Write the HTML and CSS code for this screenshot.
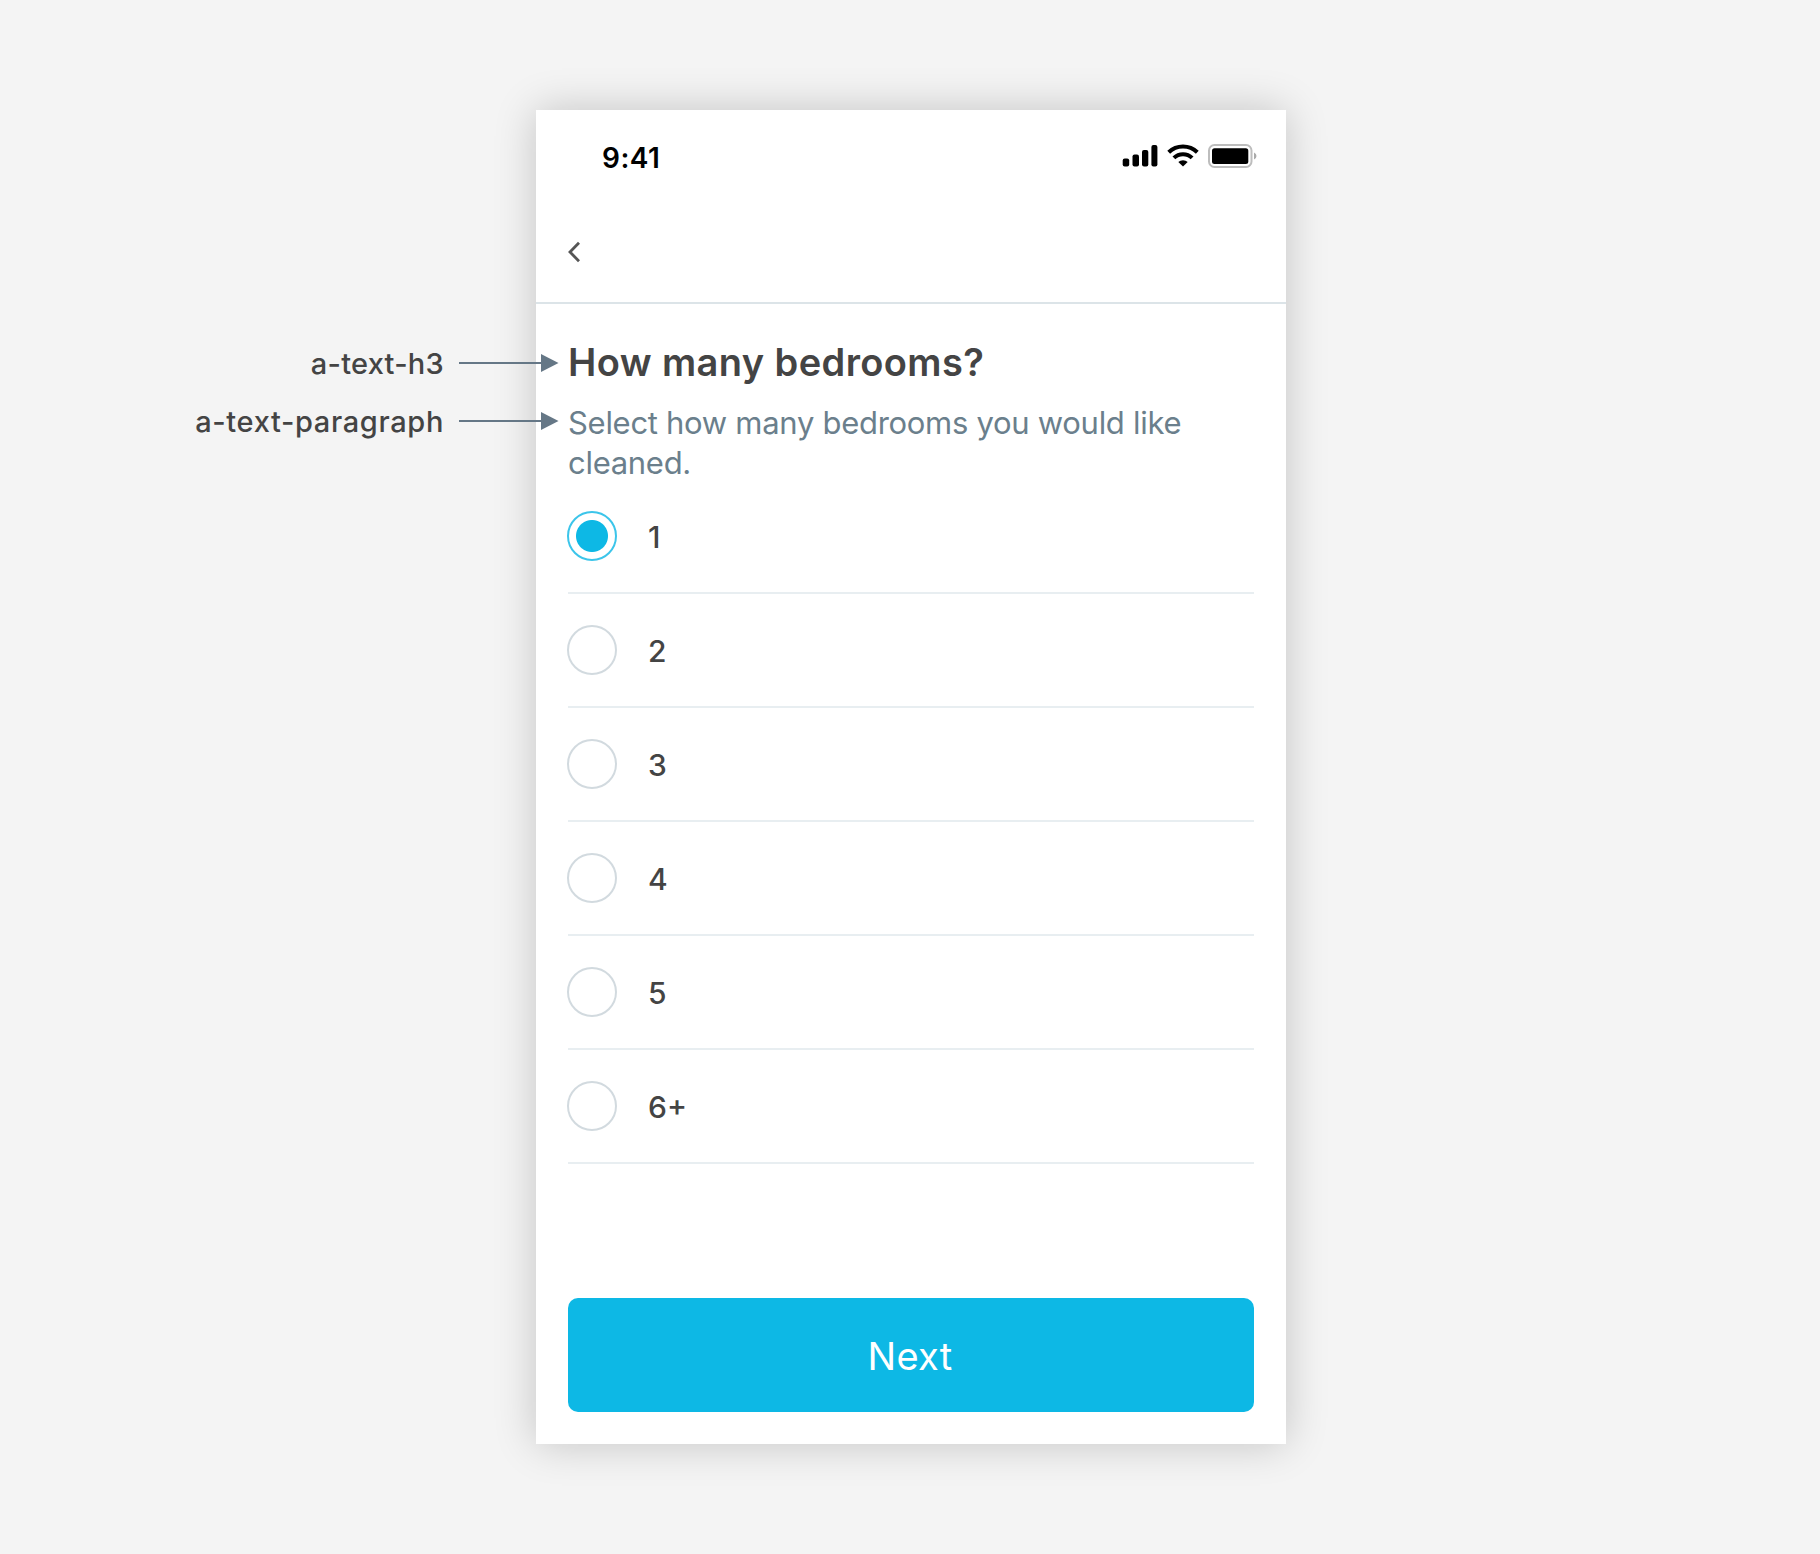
FILE: index.html
```html
<!DOCTYPE html>
<html lang="en">
<head>
<meta charset="utf-8">
<title>How many bedrooms?</title>
<link rel="stylesheet" href="styles.css">
</head>
<body>
<div class="stage">
  <aside class="notes">
    <div class="note note-h3"><span class="note-label">a-text-h3</span>
      <svg class="arrow" width="100" height="18" viewBox="0 0 100 18"><path d="M0 9H83" stroke="#657786" stroke-width="2"/><path d="M82 0L99.5 9L82 18Z" fill="#657786"/></svg>
    </div>
    <div class="note note-paragraph"><span class="note-label">a-text-paragraph</span>
      <svg class="arrow" width="100" height="18" viewBox="0 0 100 18"><path d="M0 9H83" stroke="#657786" stroke-width="2"/><path d="M82 0L99.5 9L82 18Z" fill="#657786"/></svg>
    </div>
  </aside>
  <main class="phone">
    <div class="status">
      <span class="time">9:41</span>
      <svg width="140" height="32" viewBox="0 0 140 32">
        <rect x="2.700" y="18.500" width="6.500" height="8" rx="2"/>
        <rect x="12.500" y="14.500" width="6.500" height="12" rx="2"/>
        <rect x="22" y="10" width="6.300" height="16.500" rx="2"/>
        <rect x="31.400" y="5" width="6" height="21.500" rx="2"/>
        <g fill="none" stroke="#000" stroke-width="4">
          <path d="M48.700 12.200a20.500 20.500 0 0 1 28.600 0"/>
          <path d="M53.900 17.900a13 13 0 0 1 18.200 0"/>
        </g>
        <path d="M63 26.600L58.300 22.100a6.800 6.800 0 0 1 9.400 0Z"/>
        <rect x="89" y="5" width="42.500" height="22" rx="5.500" fill="none" stroke="#bdbdbd" stroke-width="2"/>
        <rect x="92" y="8.200" width="36.300" height="15.800" rx="2.500"/>
        <path d="M134 12.500v7q2.500-1 2.500-3.500t-2.500-3.500z" fill="#aaa"/>
      </svg>
    </div>
    <nav class="nav">
      <svg width="14" height="22" viewBox="0 0 14 22"><path d="M11 1.800L2 11L11 20.200" fill="none" stroke="#555" stroke-width="2.800"/></svg>
    </nav>
    <header class="intro">
      <h3 class="title">How many bedrooms?</h3>
      <p class="paragraph">Select how many bedrooms you would like cleaned.</p>
    </header>
    <ul class="options">
      <li class="option"><span class="radio radio-on"></span><span class="value">1</span></li>
      <li class="option"><span class="radio"></span><span class="value">2</span></li>
      <li class="option"><span class="radio"></span><span class="value">3</span></li>
      <li class="option"><span class="radio"></span><span class="value">4</span></li>
      <li class="option"><span class="radio"></span><span class="value">5</span></li>
      <li class="option"><span class="radio"></span><span class="value">6+</span></li>
    </ul>
    <button class="next" type="button">Next</button>
  </main>
</div>
</body>
</html>
```
FILE: styles.css
```css
* { box-sizing: border-box; }
body {
  margin: 0;
  background: #f4f4f4;
  color: #444;
  font-family: Inter, "Liberation Sans", sans-serif;
}
.stage {
  display: flex;
  align-items: flex-start;
  height: 1554px;
  padding-top: 110px;
}
.notes {
  position: relative;
  z-index: 1;
  width: 559px;
  margin-right: -23px;
  padding-top: 233px;
}
.note {
  display: flex;
  align-items: center;
  justify-content: flex-end;
  gap: 15px;
  height: 40px;
}
.note-h3 { letter-spacing: 0.25px; }
.note-paragraph {
  margin-top: 18px;
  letter-spacing: 0.65px;
}
.note-label {
  font-size: 29px;
  font-weight: 500;
  line-height: 40px;
  padding-top: 2px;
}
.phone {
  display: flex;
  flex-direction: column;
  width: 750px;
  height: 1334px;
  background: #fff;
  box-shadow: 0 0 40px rgba(0, 0, 0, 0.2);
}
.status {
  display: flex;
  align-items: center;
  justify-content: space-between;
  height: 96px;
  padding: 0 26px 0 66px;
  color: #000;
}
.status svg { margin-bottom: 4px; }
.time {
  font-size: 28px;
  font-weight: 600;
  line-height: 34px;
  letter-spacing: 0.5px;
}
.nav {
  display: flex;
  align-items: center;
  height: 98px;
  padding: 0 32px 4px;
  border-bottom: 2px solid #dce4e8;
}
.intro {
  height: 176px;
  padding: 35px 32px 0;
}
.title {
  margin: 0;
  font-size: 38px;
  font-weight: 600;
  line-height: 46px;
  letter-spacing: 0.4px;
}
.paragraph {
  margin: 18px 0 0;
  color: #6b7f8c;
  font-size: 31px;
  line-height: 40px;
  letter-spacing: -0.29px;
}
.options {
  margin: 0 32px;
  padding: 0;
  list-style: none;
}
.option {
  display: flex;
  align-items: center;
  gap: 31px;
  height: 114px;
  border-bottom: 2px solid #e8eef1;
  font-size: 30px;
  font-weight: 500;
}
.value { padding-top: 2px; }
.radio {
  width: 50px;
  height: 50px;
  margin-left: -1px;
  border: 2px solid #d2dadf;
  border-radius: 50%;
}
.radio-on {
  border-color: #3cc5ea;
  background: radial-gradient(circle, #0db8e5 15.5px, #fff 16.5px);
}
.next {
  height: 114px;
  margin: auto 32px 32px;
  padding: 2px 2px 0 0;
  border: 0;
  border-radius: 10px;
  background: #0db8e5;
  color: #fff;
  font: 400 38px/46px Inter, "Liberation Sans", sans-serif;
  letter-spacing: 0.3px;
}
```
